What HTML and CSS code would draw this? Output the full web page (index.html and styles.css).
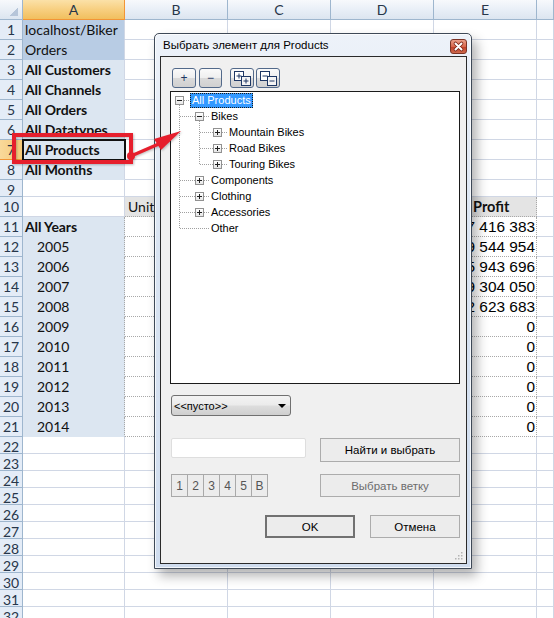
FILE: index.html
```html
<!DOCTYPE html>
<html>
<head>
<meta charset="utf-8">
<link rel="stylesheet" href="styles.css">
</head>
<body>
<div class="sheet">
  <div class="h corner"></div><div class="h hs">A</div><div class="h">B</div><div class="h">C</div><div class="h">D</div><div class="h">E</div><div class="h"></div>

  <div class="r">1</div><div class="a1">localhost/Biker</div><div></div><div></div><div></div><div></div><div></div>
  <div class="r">2</div><div class="a1">Orders</div><div></div><div></div><div></div><div></div><div></div>
  <div class="r">3</div><div class="ab">All Customers</div><div></div><div></div><div></div><div></div><div></div>
  <div class="r">4</div><div class="ab">All Channels</div><div></div><div></div><div></div><div></div><div></div>
  <div class="r">5</div><div class="ab">All Orders</div><div></div><div></div><div></div><div></div><div></div>
  <div class="r">6</div><div class="ab">All Datatypes</div><div></div><div></div><div></div><div></div><div></div>
  <div class="r rs">7</div><div class="ab cur">All Products</div><div></div><div></div><div></div><div></div><div></div>
  <div class="r">8</div><div class="ab">All Months</div><div></div><div></div><div></div><div></div><div></div>
  <div class="r">9</div><div></div><div></div><div></div><div></div><div></div><div></div>
  <div class="r">10</div><div></div><div class="p hd">Unit Sales</div><div class="p hd">Sales Amount</div><div class="p hd">Cost</div><div class="p pe hd b ep">Total Profit</div><div></div>

  <div class="r">11</div><div class="ab pa">All Years</div><div class="p"></div><div class="p"></div><div class="p"></div><div class="p pe v">107 416 383</div><div></div>
  <div class="r">12</div><div class="ay pa">2005</div><div class="p"></div><div class="p"></div><div class="p"></div><div class="p pe v">119 544 954</div><div></div>
  <div class="r">13</div><div class="ay pa">2006</div><div class="p"></div><div class="p"></div><div class="p"></div><div class="p pe v">125 943 696</div><div></div>
  <div class="r">14</div><div class="ay pa">2007</div><div class="p"></div><div class="p"></div><div class="p"></div><div class="p pe v">129 304 050</div><div></div>
  <div class="r">15</div><div class="ay pa">2008</div><div class="p"></div><div class="p"></div><div class="p"></div><div class="p pe v">132 623 683</div><div></div>
  <div class="r">16</div><div class="ay pa">2009</div><div class="p"></div><div class="p"></div><div class="p"></div><div class="p pe v">0</div><div></div>
  <div class="r">17</div><div class="ay pa">2010</div><div class="p"></div><div class="p"></div><div class="p"></div><div class="p pe v">0</div><div></div>
  <div class="r">18</div><div class="ay pa">2011</div><div class="p"></div><div class="p"></div><div class="p"></div><div class="p pe v">0</div><div></div>
  <div class="r">19</div><div class="ay pa">2012</div><div class="p"></div><div class="p"></div><div class="p"></div><div class="p pe v">0</div><div></div>
  <div class="r">20</div><div class="ay pa">2013</div><div class="p"></div><div class="p"></div><div class="p"></div><div class="p pe v">0</div><div></div>
  <div class="r">21</div><div class="ay pa">2014</div><div class="p"></div><div class="p"></div><div class="p"></div><div class="p pe v">0</div><div></div>

  <div class="r">22</div><div></div><div></div><div></div><div></div><div></div><div></div>
  <div class="r">23</div><div></div><div></div><div></div><div></div><div></div><div></div>
  <div class="r">24</div><div></div><div></div><div></div><div></div><div></div><div></div>
  <div class="r">25</div><div></div><div></div><div></div><div></div><div></div><div></div>
  <div class="r">26</div><div></div><div></div><div></div><div></div><div></div><div></div>
  <div class="r">27</div><div></div><div></div><div></div><div></div><div></div><div></div>
  <div class="r">28</div><div></div><div></div><div></div><div></div><div></div><div></div>
  <div class="r">29</div><div></div><div></div><div></div><div></div><div></div><div></div>
  <div class="r">30</div><div></div><div></div><div></div><div></div><div></div><div></div>
  <div class="r">31</div><div></div><div></div><div></div><div></div><div></div><div></div>
  <div class="r">32</div><div></div><div></div><div></div><div></div><div></div><div></div>
</div>

<div class="dlg">
  <div class="titlebar">
    <span class="ttl">Выбрать элемент для Products</span>
    <span class="close"><svg width="17" height="15" viewBox="0 0 17 15"><path d="M5.5 4.5l6 6M11.5 4.5l-6 6" stroke="#7a2416" stroke-width="3.6" stroke-linecap="round"/><path d="M5.5 4.5l6 6M11.5 4.5l-6 6" stroke="#fff" stroke-width="2" stroke-linecap="round"/></svg></span>
  </div>
  <div class="client">
    <div class="toolbar">
      <span class="tb w24">+</span>
      <span class="tb w23">−</span>
      <span class="tb w24 gap"><svg width="22" height="18" viewBox="0 0 22 18"><rect x="3.5" y="2.5" width="9" height="9" fill="#fff" stroke="#1e3764"/><path d="M5.5 7h5M8 4.5v5" stroke="#1e3764"/><rect x="10.5" y="7.5" width="9" height="9" fill="#f4f4f4" stroke="#1e3764"/><path d="M12.5 12h5M15 9.5v5" stroke="#1e3764"/></svg></span>
      <span class="tb w24"><svg width="22" height="18" viewBox="0 0 22 18"><rect x="3.5" y="2.5" width="9" height="9" fill="#fff" stroke="#1e3764"/><path d="M5.5 7h5" stroke="#1e3764"/><rect x="10.5" y="7.5" width="9" height="9" fill="#f4f4f4" stroke="#1e3764"/><path d="M12.5 12h5" stroke="#1e3764"/></svg></span>
    </div>
    <div class="tree">
      <svg class="lines" width="60" height="140" viewBox="0 0 60 140">
        <g stroke="#a0a0a0" stroke-dasharray="1 1" shape-rendering="crispEdges">
          <path d="M8.5 13V137M28.5 29V73"/>
          <path d="M13 8.5H19M9 24.5H24M33 24.5H38M29 40.5H42M51 40.5H56M29 56.5H42M51 56.5H56M29 72.5H42M51 72.5H56M9 88.5H24M33 88.5H38M9 104.5H24M33 104.5H38M9 120.5H24M33 120.5H38M9 136.5H38"/>
        </g>
      </svg>
      <div class="n l0"><span class="tg"></span><span class="lb sel">All Products</span></div>
      <div class="n l1"><span class="tg"></span><span class="lb">Bikes</span></div>
      <div class="n l2"><span class="tg pl"></span><span class="lb">Mountain Bikes</span></div>
      <div class="n l2"><span class="tg pl"></span><span class="lb">Road Bikes</span></div>
      <div class="n l2"><span class="tg pl"></span><span class="lb">Touring Bikes</span></div>
      <div class="n l1"><span class="tg pl"></span><span class="lb">Components</span></div>
      <div class="n l1"><span class="tg pl"></span><span class="lb">Clothing</span></div>
      <div class="n l1"><span class="tg pl"></span><span class="lb">Accessories</span></div>
      <div class="n l1"><span class="sp"></span><span class="lb">Other</span></div>
    </div>
    <div class="combo"><span>&lt;&lt;пусто&gt;&gt;</span><span class="arr"></span></div>
    <div class="row r1">
      <span class="search"></span>
      <span class="btn wide">Найти и выбрать</span>
    </div>
    <div class="row r2">
      <div class="nums"><span>1</span><span>2</span><span>3</span><span>4</span><span>5</span><span>B</span></div>
      <span class="btn wide dis">Выбрать ветку</span>
    </div>
    <div class="row r3">
      <span class="btn std ok">OK</span>
      <span class="btn std">Отмена</span>
    </div>
    <svg class="grip" width="8" height="8" viewBox="0 0 8 8"><g fill="#b4b4b4"><rect x="6" y="0" width="1.5" height="1.5"/><rect x="3" y="3" width="1.5" height="1.5"/><rect x="6" y="3" width="1.5" height="1.5"/><rect x="0" y="6" width="1.5" height="1.5"/><rect x="3" y="6" width="1.5" height="1.5"/><rect x="6" y="6" width="1.5" height="1.5"/></g></svg>
  </div>
</div>

<svg class="marks" width="554" height="618" viewBox="0 0 554 618">
  <rect x="14" y="135" width="117" height="27" fill="none" stroke="#e61f2d" stroke-width="4"/>
  <path d="M131 156L161 143" stroke="#e61f2d" stroke-width="3.5" stroke-linecap="round"/>
  <path d="M181 131L154 139L161 150Z" fill="#e61f2d"/>
  <circle cx="131" cy="156" r="4" fill="#e61f2d"/>
</svg>
</body>
</html>
```
FILE: styles.css
```css
* { box-sizing: border-box; }
body {
  margin: 0;
  width: 554px;
  height: 618px;
  overflow: hidden;
  position: relative;
  background: #fff;
  font-family: Lato, "Liberation Sans", sans-serif;
}

/* ---------- spreadsheet ---------- */
.sheet {
  display: grid;
  grid-template-columns: 23px 102px 103px 103px 103px 103px 17px;
  grid-template-rows: 20px repeat(8, 20px) 17px repeat(12, 20px) repeat(11, 17px);
}
.sheet > div {
  border-right: 1px solid #d0d7e5;
  border-bottom: 1px solid #d0d7e5;
  font-size: 14px;
  line-height: 19px;
  padding-left: 2px;
  white-space: nowrap;
  overflow: hidden;
  color: #111;
}
.sheet > .h {
  background: linear-gradient(#f7f9fc, #e9eff7 50%, #dce5f0);
  border-right-color: #9eb6ce;
  border-bottom-color: #9eb6ce;
  text-align: center;
  padding: 0;
  color: #27364a;
  font-size: 14px;
}
.sheet > .corner {
  background:
    linear-gradient(135deg, transparent 50%, #b6c5d9 50%) right 4px bottom 3px / 9px 9px no-repeat,
    linear-gradient(#f7f9fc, #dce5f0);
}
.sheet > .hs {
  background: linear-gradient(#fbe1a8, #f7cf80 50%, #f1bf5e);
  border-right-color: #f29536;
  border-bottom-color: #f29536;
}
.sheet > .r {
  background: #e4ecf7;
  border-right-color: #9eb6ce;
  border-bottom-color: #9eb6ce;
  text-align: center;
  padding: 0;
  color: #27364a;
  font-size: 14px;
}
.sheet > .rs {
  background: linear-gradient(90deg, #f9d99a, #f5c978);
  border-bottom-color: #f29536;
}
.sheet > .a1 {
  background: #b8cce4;
  border-bottom-color: #b8cce4;
}
.sheet > .ab {
  background: #dce6f1;
  border-bottom-color: #dce6f1;
  font-weight: bold;
  letter-spacing: -0.1px;
}
.sheet > .ay {
  background: #dce6f1;
  border-bottom-color: #dce6f1;
  padding-left: 14px;
}
.sheet > .pa {
  border-right: 1px dotted #a8a8a8;
}
.sheet > .cur {
  position: relative;
  z-index: 1;
  outline: 2px solid #111;
  outline-offset: -1px;
}
.sheet > .p {
  border-bottom: 1px dotted #a8a8a8;
}
.sheet > .pe {
  border-right: 1px dotted #a8a8a8;
}
.sheet > .hd {
  background: #e4e4e4;
  padding-left: 3px;
}
.sheet > .b { font-weight: bold; font-size: 14.5px; }
.sheet > .ep { padding-left: 4px; }
.sheet > .v {
  text-align: right;
  padding-right: 1px;
  font-family: "Liberation Sans Narrow", "Arial Narrow", "Liberation Sans", sans-serif;
  font-size: 15.4px;
  color: #000;
}

/* ---------- dialog ---------- */
.dlg {
  position: absolute;
  left: 154px;
  top: 33px;
  width: 318px;
  height: 536px;
  border: 1px solid #3e4957;
  border-radius: 5px 5px 0 0;
  background: linear-gradient(#edf2f9, #d9e4f2 40%, #cfdcee);
  box-shadow: inset 0 0 0 1px rgba(255,255,255,.75), 5px 7px 12px rgba(0,0,0,.3);
  padding: 0 4px 4px 5px;
  display: flex;
  flex-direction: column;
  font-family: "Liberation Sans", Arial, sans-serif;
  z-index: 2;
}
.titlebar {
  height: 22px;
  display: flex;
  justify-content: space-between;
  align-items: flex-start;
}
.ttl {
  font-size: 11.5px;
  color: #000;
  padding: 5px 0 0 3px;
}
.close {
  margin-top: 5px;
  width: 17px;
  height: 15px;
  border: 1px solid #7c3325;
  border-radius: 3px;
  background: linear-gradient(#eaa08a, #d8674d 50%, #c0412a 55%, #cf6a4c);
  display: flex;
}
.close svg { margin: -1px; }
.client {
  flex: 1;
  border: 1px solid #2a2a2a;
  background: #f0f0f0;
  padding: 11px 6px 0 9px;
  display: flex;
  flex-direction: column;
}
.toolbar {
  display: flex;
  height: 20px;
  margin-left: 2px;
}
.tb {
  height: 20px;
  border: 1px solid #52698a;
  border-radius: 3px;
  background: linear-gradient(#fafafa, #efefef 48%, #dadada 52%, #d0d0d0);
  display: flex;
  align-items: center;
  justify-content: center;
  font-size: 12px;
  color: #1e3764;
  margin-right: 3px;
}
.tb.w24 { width: 24px; }
.tb.w23 { width: 23px; }
.tb.gap { margin-left: 5px; margin-right: 2px; }
.tree {
  position: relative;
  margin-top: 3px;
  height: 293px;
  border: 1px solid #1b1b1b;
  background: #fff;
  font-size: 11px;
}
.lines {
  position: absolute;
  left: 0;
  top: 0;
}
.n {
  height: 16px;
  display: flex;
  align-items: flex-start;
}
.n.l0 { padding-left: 4px; }
.n.l1 { padding-left: 24px; }
.n.l2 { padding-left: 42px; }
.tg {
  width: 9px;
  height: 9px;
  margin-top: 4px;
  border: 1px solid #919191;
  background:
    linear-gradient(#1f1f1f, #1f1f1f) center / 5px 1px no-repeat,
    linear-gradient(#ffffff, #e6e6e6);
}
.tg.pl {
  background:
    linear-gradient(#1f1f1f, #1f1f1f) center / 5px 1px no-repeat,
    linear-gradient(#1f1f1f, #1f1f1f) center / 1px 5px no-repeat,
    linear-gradient(#ffffff, #e6e6e6);
}
.sp { width: 9px; }
.lb {
  margin: 1px 0 0 5px;
  height: 15px;
  line-height: 15px;
  padding: 0 2px;
  color: #000;
  white-space: nowrap;
}
.l0 .lb { margin-left: 6px; }
.lb.sel {
  background: #3399ff;
  color: #fff;
  outline: 1px dotted #1a1a1a;
  outline-offset: -1px;
}
.combo {
  margin: 11px 0 0 1px;
  width: 120px;
  height: 21px;
  border: 1px solid #707070;
  border-radius: 3px;
  background: linear-gradient(#f3f3f3, #ebebeb 48%, #dddddd 52%, #cfcfcf);
  display: flex;
  align-items: center;
  justify-content: space-between;
  padding: 0 4px 0 2px;
  font-size: 11px;
  color: #000;
}
.arr {
  width: 0;
  height: 0;
  border-left: 4px solid transparent;
  border-right: 4px solid transparent;
  border-top: 4px solid #000;
}
.row {
  display: flex;
  justify-content: space-between;
  align-items: flex-start;
}
.r1 { margin-top: 22px; }
.r2 { margin-top: 12px; }
.r3 { margin-top: 18px; justify-content: flex-end; gap: 15px; }
.search {
  margin-left: 1px;
  width: 135px;
  height: 20px;
  background: #fff;
  border: 1px solid #dedede;
  border-radius: 2px;
}
.btn {
  height: 24px;
  border: 1px solid #acacac;
  background: #ececec;
  display: flex;
  align-items: center;
  justify-content: center;
  font-size: 11.5px;
  color: #000;
}
.btn.wide { width: 140px; }
.r2 .btn { height: 23px; }
.btn.std { width: 90px; height: 23px; }
.btn.ok { border: 2px solid #717171; }
.btn.dis { color: #6d6d6d; }
.nums {
  display: flex;
  margin-left: 2px;
}
.nums span {
  width: 17px;
  height: 23px;
  margin-left: -1px;
  border: 1px solid #a9a9a9;
  background: #ececec;
  color: #555;
  font-size: 12px;
  display: flex;
  align-items: center;
  justify-content: center;
}
.grip {
  margin-top: auto;
  margin-bottom: 3px;
  margin-right: -3px;
  align-self: flex-end;
}

/* ---------- annotation ---------- */
.marks {
  position: absolute;
  left: 0;
  top: 0;
  z-index: 3;
  filter: drop-shadow(1px 1px 1px rgba(0,0,0,.25));
}
```
